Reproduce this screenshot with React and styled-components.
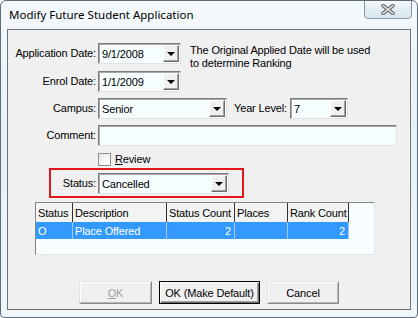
import styled, { createGlobalStyle } from 'styled-components';

const GlobalStyle = createGlobalStyle`
  html, body {
    margin: 0;
    padding: 0;
    background: #ffffff;
  }
  * {
    box-sizing: border-box;
  }
`;

const statusRows = [
  { code: 'O', description: 'Place Offered', count: 2, places: '', rank: 2 },
];

const App = () => {
  return (
    <>
      <GlobalStyle />
      <StWindow>
        <StTitleBar>
          <StTitle>Modify Future Student Application</StTitle>
          <StCloseBtn>
            <svg width="16" height="11" viewBox="0 0 16 11">
              <path d="M3 1.5 L13 9.5 M13 1.5 L3 9.5" stroke="#6a6a6a" strokeWidth="3.6" strokeLinecap="round" />
              <path d="M3 1.5 L13 9.5 M13 1.5 L3 9.5" stroke="#eeeeee" strokeWidth="1.4" strokeLinecap="round" />
            </svg>
          </StCloseBtn>
        </StTitleBar>

        <StClient>
          <StRow $mt={0}>
            <StLabel>Application Date:</StLabel>
            <StInput $w={83}>
              <StValue>9/1/2008</StValue>
              <DropButton />
            </StInput>
            <StHint>
              The Original Applied Date will be used
              <br />
              to determine Ranking
            </StHint>
          </StRow>

          <StRow $mt={7}>
            <StLabel>Enrol Date:</StLabel>
            <StInput $w={83}>
              <StValue>1/1/2009</StValue>
              <DropButton />
            </StInput>
          </StRow>

          <StRow $mt={6}>
            <StLabel>Campus:</StLabel>
            <StInput $w={129}>
              <StValue>Senior</StValue>
              <DropButton />
            </StInput>
            <StSideLabel>Year Level:</StSideLabel>
            <StInput $w={58}>
              <StValue>7</StValue>
              <DropButton />
            </StInput>
          </StRow>

          <StRow $mt={6}>
            <StLabel>Comment:</StLabel>
            <StInput $w={299} />
          </StRow>

          <StCheckRow>
            <StCheckbox />
            <StCheckText>
              <u>R</u>eview
            </StCheckText>
          </StCheckRow>

          <StStatusBox>
            <StStatusLabel>Status:</StStatusLabel>
            <StInput $w={131}>
              <StValue>Cancelled</StValue>
              <DropButton />
            </StInput>
          </StStatusBox>

          <StGrid>
            <StGridHead>
              <StHeadCell>Status</StHeadCell>
              <StHeadCell>Description</StHeadCell>
              <StHeadCell>Status Count</StHeadCell>
              <StHeadCell>Places</StHeadCell>
              <StHeadCell>Rank Count</StHeadCell>
              <StFiller />
            </StGridHead>
            {statusRows.map((row) => (
              <StGridRow key={row.code}>
                <StCell>{row.code}</StCell>
                <StCell>{row.description}</StCell>
                <StCell $right>{row.count}</StCell>
                <StCell>{row.places}</StCell>
                <StCell $right>{row.rank}</StCell>
                <StFiller />
              </StGridRow>
            ))}
          </StGrid>

          <StFooter>
            <StButton $w={73} disabled>
              <u>O</u>K
            </StButton>
            <StButton $w={101} $default>
              OK (Make Default)
            </StButton>
            <StButton $w={72}>Cancel</StButton>
          </StFooter>
        </StClient>
      </StWindow>
    </>
  );
};

const DropButton = () => (
  <StDropBtn>
    <StArrow />
  </StDropBtn>
);

export default App;

const StWindow = styled.div`
  display: flex;
  flex-direction: column;
  width: 418px;
  height: 318px;
  border: 1px solid #5e6b78;
  border-radius: 6px 6px 4px 4px;
  background: linear-gradient(180deg, #f3f8fb 0%, #e6f1f8 45%, #eef6fb 100%);
  font-family: 'Liberation Sans', Arial, sans-serif;
  font-size: 11px;
  letter-spacing: -0.15px;
  color: #000;
  overflow: hidden;
`;

const StTitleBar = styled.div`
  display: flex;
  justify-content: space-between;
  align-items: flex-start;
  height: 28px;
  flex-shrink: 0;
`;

const StTitle = styled.span`
  padding: 5px 0 0 8px;
  font-family: 'Noto Sans', 'Open Sans', sans-serif;
  font-size: 11.5px;
  letter-spacing: 0;
  line-height: 18px;
  color: #000;
`;

const StCloseBtn = styled.div`
  display: flex;
  justify-content: center;
  align-items: center;
  width: 48px;
  height: 19px;
  margin: -1px 5px 0 0;
  border: 1px solid #8796a4;
  border-radius: 0 0 4px 4px;
  background: linear-gradient(180deg, #f4f8fb 0%, #e4edf3 50%, #d9e5ee 100%);
`;

const StClient = styled.div`
  display: flex;
  flex-direction: column;
  height: 281px;
  margin: 0 6px;
  padding-top: 13px;
  border: 1px solid #727272;
  background: #f0f0f0;
`;

const StRow = styled.div`
  display: flex;
  align-items: flex-start;
  height: 21px;
  margin-top: ${(props) => props.$mt}px;
`;

const StLabel = styled.span`
  width: 90px;
  padding-right: 2px;
  line-height: 21px;
  text-align: right;
  white-space: nowrap;
`;

const StSideLabel = styled.span`
  margin: 0 1px 0 7px;
  width: 55px;
  line-height: 21px;
  white-space: nowrap;
`;

const StInput = styled.div`
  display: flex;
  align-items: center;
  justify-content: space-between;
  width: ${(props) => props.$w}px;
  height: 21px;
  padding: 1px;
  border: 1px solid;
  border-color: #7c7c7c #e2e2e2 #e2e2e2 #7c7c7c;
  box-shadow: inset 1px 1px 0 #a9a9a9;
  background: #f6fdff;
`;

const StValue = styled.span`
  padding: 1px 0 0 2px;
  white-space: nowrap;
`;

const StDropBtn = styled.div`
  display: flex;
  justify-content: center;
  align-items: center;
  width: 16px;
  height: 17px;
  border: 1px solid;
  border-color: #ffffff #6e6e6e #6e6e6e #ffffff;
  box-shadow: inset -1px -1px 0 #a0a0a0;
  background: #f0f0f0;
`;

const StArrow = styled.span`
  width: 0;
  height: 0;
  margin-top: 1px;
  border-left: 4px solid transparent;
  border-right: 4px solid transparent;
  border-top: 4px solid #000;
`;

const StHint = styled.div`
  margin: 1px 0 0 9px;
  line-height: 13px;
  white-space: nowrap;
`;

const StCheckRow = styled.div`
  display: flex;
  align-items: center;
  height: 13px;
  margin: 7px 0 0 90px;
`;

const StCheckbox = styled.span`
  width: 13px;
  height: 13px;
  border: 1px solid #8f8f8f;
  background: linear-gradient(135deg, #e6e6e6 0%, #ffffff 80%);
`;

const StCheckText = styled.span`
  margin-left: 4px;
  line-height: 13px;
`;

const StStatusBox = styled.div`
  display: flex;
  align-items: center;
  width: 195px;
  height: 30px;
  margin: 2px 0 0 41px;
  border: 2px solid #e3161c;
`;

const StStatusLabel = styled.span`
  width: 47px;
  padding-right: 2px;
  text-align: right;
`;

const StGrid = styled.div`
  display: flex;
  flex-direction: column;
  width: 340px;
  height: 53px;
  margin: 4px 0 0 27px;
  border: 1px solid;
  border-color: #848484 #e4e4e4 #e4e4e4 #848484;
  background: #f8fdff;
`;

const StGridHead = styled.div`
  display: grid;
  grid-template-columns: 37px 94px 68px 53px 61px 1fr;
  height: 19px;
`;

const StHeadCell = styled.div`
  padding: 3px 0 0 2px;
  border-right: 1px solid #2f2f2f;
  background: #f3f3f3;
  line-height: 14px;
  white-space: nowrap;
  overflow: hidden;
`;

const StGridRow = styled.div`
  display: grid;
  grid-template-columns: 37px 94px 68px 53px 61px 1fr;
  height: 17px;
`;

const StCell = styled.div`
  padding: 2px 3px 0 2px;
  border-right: 1px solid #a7c8ea;
  background: #3399ff;
  color: #fff;
  line-height: 14px;
  text-align: ${(props) => (props.$right ? 'right' : 'left')};
  white-space: nowrap;
`;

const StFiller = styled.div`
  background: #f8fdff;
`;

const StFooter = styled.div`
  display: flex;
  justify-content: center;
  gap: 7px;
  margin-top: 26px;
`;

const StButton = styled.button`
  width: ${(props) => props.$w}px;
  height: 23px;
  padding: 0;
  font-family: 'Liberation Sans', Arial, sans-serif;
  font-size: 11px;
  letter-spacing: -0.15px;
  color: ${(props) => (props.disabled ? '#a0a0a0' : '#000')};
  background: #f0f0f0;
  border: 1px solid;
  border-color: ${(props) => (props.$default ? '#000' : '#e3e3e3 #8a8a8a #8a8a8a #e3e3e3')};
  box-shadow: ${(props) =>
    props.$default
      ? 'inset 1px 1px 0 #ffffff, inset -1px -1px 0 #6e6e6e, inset -2px -2px 0 #a0a0a0'
      : 'inset 1px 1px 0 #ffffff, inset -1px -1px 0 #b4b4b4'};
`;
